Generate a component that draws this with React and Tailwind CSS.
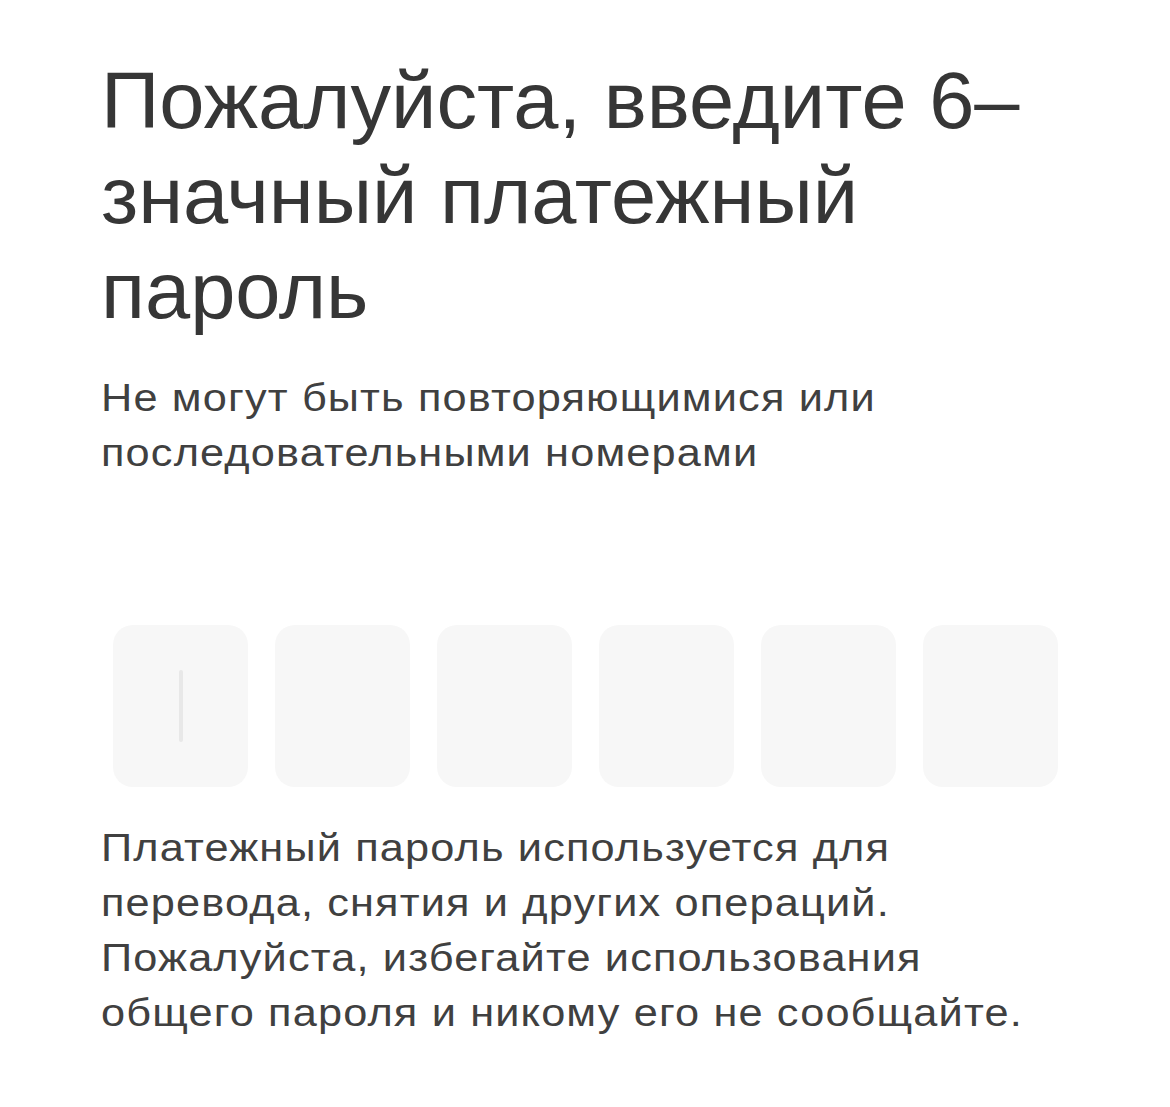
export default function App() {
  const cells = [0, 1, 2, 3, 4, 5];
  return (
    <div
      className="min-h-[1107px] w-[1170px] overflow-hidden bg-white text-[#383838]"
      style={{ fontFamily: '"Liberation Sans", Arial, sans-serif' }}
    >
      <div className="pt-[53px] pl-[101px]">
        <h1 className="origin-left scale-x-[1.028] text-[79px] leading-[95px] font-normal text-[#363636]">
          <span className="block whitespace-nowrap">Пожалуйста, введите 6–</span>
          <span className="block whitespace-nowrap">значный платежный</span>
          <span className="block whitespace-nowrap">пароль</span>
        </h1>
        <p className="mt-[33px] origin-left scale-x-[1.14] text-[38px] leading-[55px] tracking-[1px] text-[#404040]">
          <span className="block whitespace-nowrap">Не могут быть повторяющимися или</span>
          <span className="block whitespace-nowrap">последовательными номерами</span>
        </p>
      </div>

      {/* six-digit PIN cells */}
      <div className="mt-[144px] flex gap-[27px] pl-[113px]">
        {cells.map((i) => (
          <div
            key={i}
            className="flex h-[162px] w-[135px] items-center justify-center rounded-[20px] bg-[#f7f7f7]"
          >
            {i === 0 && <div className="h-[72px] w-[4px] rounded-sm bg-[#e8e8e8]" />}
          </div>
        ))}
      </div>

      <div className="pl-[101px]">
        <p className="mt-[34px] origin-left scale-x-[1.14] text-[38px] leading-[55px] tracking-[1px] text-[#404040]">
          <span className="block whitespace-nowrap">Платежный пароль используется для</span>
          <span className="block whitespace-nowrap">перевода, снятия и других операций.</span>
          <span className="block whitespace-nowrap">Пожалуйста, избегайте использования</span>
          <span className="block whitespace-nowrap">общего пароля и никому его не сообщайте.</span>
        </p>
      </div>
    </div>
  );
}
